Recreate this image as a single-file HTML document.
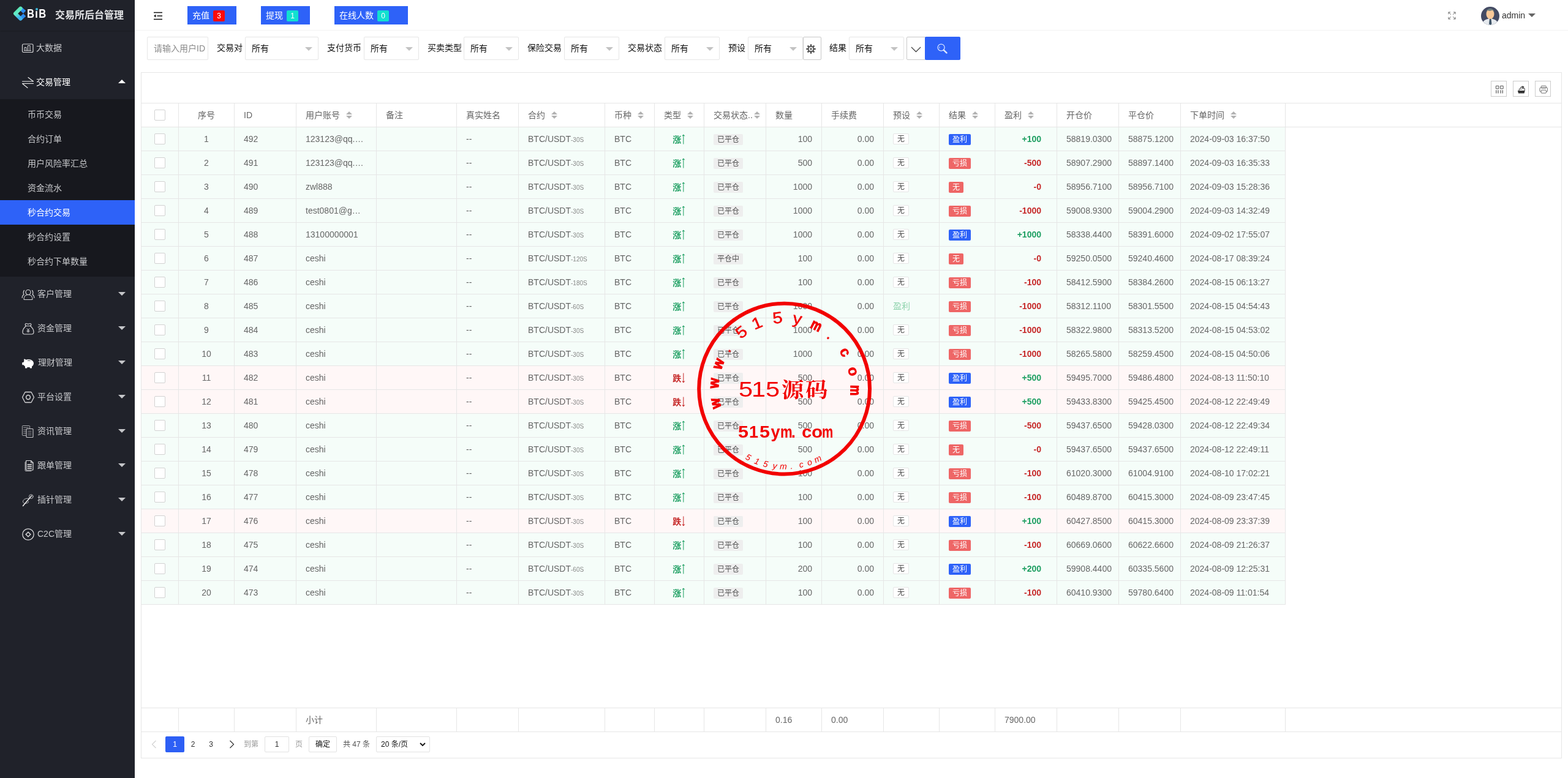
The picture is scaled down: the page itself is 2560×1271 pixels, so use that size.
<!DOCTYPE html>
<html lang="zh-CN">
<head>
<meta charset="utf-8">
<title>交易所后台管理</title>
<style>
*{box-sizing:border-box;margin:0;padding:0}
html,body{width:2560px;height:1271px;overflow:hidden;background:#fff}
body{font-family:"Liberation Sans","Noto Sans CJK SC",sans-serif;font-size:14px;color:#333;position:relative;line-height:24px}
#app{position:absolute;left:0;top:0;width:2560px;height:1271px;overflow:hidden;will-change:transform;background:#fff}
i{font-style:normal}
svg{display:block}
/* sidebar */
.side{position:absolute;left:0;top:0;width:220px;height:1271px;background:#20222a;color:#c2c4c8}
.logo{position:absolute;left:0;top:0;width:220px;height:50px;box-shadow:0 1px 2px rgba(0,0,0,.18)}
.logo svg{position:absolute}
.logo .bib{position:absolute;left:43.700px;top:9.300px;font-size:19.500px;font-weight:700;color:#fff;line-height:26px;letter-spacing:1.500px;transform:scaleX(.85);transform-origin:0 0}
.logo .dot{position:absolute;left:57.700px;top:12.600px;width:4.400px;height:4.400px;border-radius:50%;background:#3fb6d8;box-shadow:0 0 0 0.600px #20222a}
.logo .tt{position:absolute;left:90px;top:12px;font-size:16px;font-weight:700;color:#dfe0e2;line-height:26px;white-space:nowrap}
.mi{position:absolute;left:0;width:220px;height:56px;line-height:56px;font-size:14px;color:#c5c6c9;white-space:nowrap}
.mi .ic{position:absolute;left:35px;top:18px}
.mi .tx{position:absolute;left:61px;top:0}
.mi .ar{position:absolute;left:193px;top:25px;width:0;height:0;border:6px solid transparent;border-top-color:#c5c6c9;border-bottom-width:0}
.mi.open{color:#fff}
.mi.open .ar{top:24px;border:6px solid transparent;border-bottom-color:#fff;border-top-width:0}
.sub{position:absolute;left:0;top:162px;width:220px;height:290px;background:#17181e;padding-top:5px}
.sub div{height:40px;line-height:40px;padding-left:45px;font-size:14px;color:#c5c6c9;white-space:nowrap}
.sub div.on{background:#2e62f8;color:#fff}
/* header */
.top{position:absolute;left:220px;top:0;width:2340px;height:50px;border-bottom:1px solid #f3f3f3;background:#fff}
.top .ham{position:absolute;left:30px;top:19px}
.hb{position:absolute;top:10px;height:30px;line-height:30px;background:#2e62f8;color:#fff;font-size:14px;padding-left:8px;white-space:nowrap}
.hb .bd{position:absolute;top:6.500px;height:18px;min-width:19px;line-height:18px;border-radius:2px;font-size:12px;text-align:center;color:#fff}
.top .fs{position:absolute;left:2143.500px;top:19.300px}
.top .av{position:absolute;left:2198px;top:11px;width:30px;height:30px}
.top .ad{position:absolute;left:2232px;top:13px;font-size:14px;color:#333;line-height:24px}
.top .ca{position:absolute;left:2275px;top:22px;width:0;height:0;border:6px solid transparent;border-top-color:#666;border-bottom-width:0}
/* filter */
.flt{position:absolute;left:220px;top:50px;width:2340px;height:60px}
.flt .in{position:absolute;top:10px;height:38px;border:1px solid #e6e6e6;border-radius:2px;background:#fff;line-height:37px;padding-left:10px;font-size:14px;color:#111;white-space:nowrap}
.flt .in.ph{color:#8a8a8a}
.flt .in .ed{position:absolute;right:9px;top:15.500px;width:0;height:0;border:6px solid transparent;border-top-color:#c2c2c2;border-bottom-width:0}
.flt .lb{position:absolute;top:10px;height:38px;line-height:36px;font-size:14px;color:#111;white-space:nowrap}
.flt .bt{position:absolute;top:10px;height:38px;border:1px solid #c9c9c9;border-radius:2px;background:#fff}
.flt .bt svg{position:absolute}
.flt .sb{position:absolute;top:10px;height:38px;border-radius:2px;background:#2e62f8}
/* table */
.tv{position:absolute;left:230px;top:118px;width:2320px;height:1121px;border:1px solid #e6e6e6;background:#fff;color:#666}
.tool{position:relative;height:50px;border-bottom:1px solid #e6e6e6}
.tool .tbn{position:absolute;top:13px;width:26px;height:26px;border:1px solid #ccc}
.tool .tbn svg{position:absolute;left:5.500px;top:5.500px}
.tb{border-collapse:separate;border-spacing:0;table-layout:fixed}
.tb th,.tb td{height:39px;border-right:1px solid #e6e6e6;border-bottom:1px solid #e6e6e6;padding:0;font-weight:400;text-align:left;font-size:14px;color:#666;vertical-align:middle;overflow:hidden;white-space:nowrap}
.tb .cell{height:28px;line-height:28px;padding:0 15px;position:relative;overflow:hidden;white-space:nowrap}
.tb .c{text-align:center}
.tb .rt{text-align:right}
.tb tr.up td{background:#f5fdf9}
.tb tr.down td{background:#fff7f7}
.cb{display:block;width:18px;height:18px;border:1px solid #d2d2d2;border-radius:2px;background:#fff;margin:0 auto}
.sort{display:inline-block;position:relative;width:10px;height:20px;margin-left:10px;vertical-align:middle;top:-1px}
.sort i{position:absolute;left:0;width:0;height:0;border:5px solid transparent}
.sort .up{top:4px;border-bottom-color:#b2b2b2;border-top-width:0;border-bottom-width:5px}
.sort .dn{top:11px;border-top-color:#b2b2b2;border-bottom-width:0;border-top-width:5px}
.sort.s2{position:absolute;right:9px;top:4px;margin:0}
small{font-size:10px;color:#888}
.g{color:#1e9f62;font-weight:700;position:relative;top:1px}
.aw{font-family:"NanumGothic",sans-serif;font-size:16px;font-weight:700}
.tb td.pf .cell{padding-right:25px}
.r{color:#c62828;font-weight:700;position:relative;top:1px}
.pg{color:#1e9f62;font-weight:700}
.pr{color:#c62828;font-weight:700}
.tag{display:inline-block;height:18px;line-height:18px;padding:0 6px;font-size:12px;border-radius:2px;background:#eee;color:#555;vertical-align:middle;position:relative;top:0}
.pre{display:inline-block;height:18px;line-height:16px;padding:0 6px;font-size:12px;border-radius:2px;border:1px solid #e6e6e6;background:#fff;color:#555;vertical-align:middle;position:relative;top:-1px}
.preg{color:#8fd3ad;font-size:14px}
.res{display:inline-block;height:18px;line-height:18px;padding:0 6px;font-size:12px;border-radius:2px;color:#fff;vertical-align:middle;position:relative;top:0}
.res.win{background:#2e62f8}
.res.loss,.res.none{background:#ee6666}
.tot{position:absolute;left:0;top:1038px}
.hl{position:absolute;left:0;width:2318px;height:1px;background:#e6e6e6}
.tot td{font-size:14px}
.pgr{position:absolute;left:0;top:1077px;width:2318px;height:42px;font-size:12px;color:#333;line-height:26px}
.pgr>*{position:absolute;top:7px;height:26px;line-height:26px;white-space:nowrap}
/* watermark stamp */
.stamp{position:absolute;width:310px;height:310px;color:#f20000;font-family:"Liberation Sans","Noto Sans CJK SC",sans-serif;white-space:nowrap}
.stamp svg{position:absolute;left:0;top:0}
.stamp .arc{position:absolute;width:0;height:0}
.stamp .arc span{position:absolute;left:-30px;top:0;width:60px;height:0;line-height:0;text-align:center;transform-origin:30px 0;font-size:26px;-webkit-text-stroke:0.500px #f20000}
.stamp .arc span.b{font-size:24px;font-weight:700;-webkit-text-stroke:0.600px #f20000}
.stamp .arc span.h{font-size:24px;font-weight:700;-webkit-text-stroke:1.300px #f20000}
.stamp .arc.lo span{font-size:14px;font-style:italic;-webkit-text-stroke:0}
.stamp .mid{position:absolute;width:310px;height:0}
.stamp .mid span{position:absolute;top:0;height:0;line-height:0;transform-origin:0 0;font-size:27px;font-weight:700}
.stamp .mid span.d{font-size:36px;font-weight:400}
.stamp .mid span.k{font-family:"Noto Serif CJK SC",serif;font-size:34px;font-weight:700;transform:scaleX(1.07)}

</style>
</head>
<body>
<div id="app">
<div class="side">
<div class="logo">
<svg width="26" height="28" viewBox="0 0 26 28" style="left:20px;top:8px"><defs><linearGradient id="lg1" x1="0" y1="0" x2="0.300" y2="1"><stop offset="0" stop-color="#58e6ae"/><stop offset="0.550" stop-color="#63ebc8"/><stop offset="1" stop-color="#3fb4ee"/></linearGradient></defs><path d="M13.500 5.600l6.600 6.200M13.500 22.600l6.600-6.200" stroke="#2b8cef" stroke-width="6" fill="none"/><path d="M13.500 5.600L5 14.100l8.500 8.500" stroke="url(#lg1)" stroke-width="6" stroke-linejoin="round" stroke-linecap="round" fill="none"/></svg>
<span class="bib">BiB</span><i class="dot"></i><span class="tt">交易所后台管理</span>
</div>
<div class="mi" style="top:50px"><svg class="ic" width="22" height="22" viewBox="0 0 22 22" fill="none" stroke="#d6d6d8" stroke-width="1.200" stroke-linecap="round" stroke-linejoin="round"><rect x="1.500" y="4" width="17.500" height="13.500" rx="2"/><path d="M5 14.500V9.500h3v5M10.500 14.500V6.500h3.500v8M4.500 14.800h11" stroke-width="1"/></svg><span class="tx" style="left:59px">大数据</span></div>
<div class="mi open" style="top:106px"><svg class="ic" width="22" height="22" viewBox="0 0 22 22" fill="none" stroke="#d6d6d8" stroke-width="1.200" stroke-linecap="round" stroke-linejoin="round"><path d="M1.500 9h18L11 2.500M19.500 12.500h-18L10 19.500" stroke="#f2f2f2" stroke-width="1.100"/></svg><span class="tx" style="left:59px">交易管理</span><i class="ar"></i></div>
<div class="sub">
<div>币币交易</div>
<div>合约订单</div>
<div>用户风险率汇总</div>
<div>资金流水</div>
<div class="on">秒合约交易</div>
<div>秒合约设置</div>
<div>秒合约下单数量</div>
</div>
<div class="mi" style="top:452px"><svg class="ic" width="22" height="22" viewBox="0 0 22 22" fill="none" stroke="#d6d6d8" stroke-width="1.200" stroke-linecap="round" stroke-linejoin="round"><circle cx="11" cy="7.500" r="4"/><path d="M4 18.500c0-4.500 3-7 7-7s7 2.500 7 7c0 0.800-0.500 1-1 1H5c-0.500 0-1-0.200-1-1z"/><path d="M4.500 4.500C2.800 6 2.800 9.500 4 11c-1.500 1-2.800 3-2.800 5.500M17.500 4.500c1.700 1.500 1.700 5 0.500 6.500 1.500 1 2.800 3 2.800 5.500"/></svg><span class="tx">客户管理</span><i class="ar"></i></div>
<div class="mi" style="top:508px"><svg class="ic" width="22" height="22" viewBox="0 0 22 22" fill="none" stroke="#d6d6d8" stroke-width="1.200" stroke-linecap="round" stroke-linejoin="round"><path d="M7.500 6.500C5.500 5 6 2.500 7.500 2.500c1.500 0 2 1 3.500 1s2-1 3.500-1c1.500 0 2 2.500 0 4"/><path d="M7.500 6.500h7c3 2.500 5.500 6.500 5.500 10 0 2.500-1.500 3.500-3.500 3.500h-11C3.500 20 2 19 2 16.500c0-3.500 2.500-7.500 5.500-10z"/><path d="M9 10.500l2 2.500 2-2.500M11 13v4M9 14h4M9 15.800h4" stroke-width="0.900"/></svg><span class="tx">资金管理</span><i class="ar"></i></div>
<div class="mi" style="top:564px"><svg class="ic" width="22" height="22" viewBox="0 0 22 22"><path d="M4.500 7.500C4 6 4 5 4.600 4.500c1 0 2 0.600 2.800 1.300C8.500 5.300 10 5 11.500 5c5 0 8.500 3 8.500 6.500 0 2.200-1.200 4-3 5.200V19.500h-3.200v-1.600c-0.800 0.100-1.600 0.200-2.300 0.200-0.800 0-1.500-0.100-2.200-0.200V19.500H6v-2.700c-1-0.700-1.800-1.500-2.300-2.500H1.800c-0.400 0-0.600-0.300-0.600-0.600v-3c0-0.400 0.300-0.600 0.600-0.600h1.600c0.200-0.900 0.600-1.800 1.100-2.600z" fill="#fff"/><path d="M10 7.200c1.500-0.400 3-0.300 4.500 0.300" stroke="#20222a" stroke-width="0.900" fill="none"/></svg><span class="tx" style="left:62px">理财管理</span><i class="ar"></i></div>
<div class="mi" style="top:620px"><svg class="ic" width="22" height="22" viewBox="0 0 22 22" fill="none" stroke="#d6d6d8" stroke-width="1.200" stroke-linecap="round" stroke-linejoin="round"><path d="M6.800 2.500h8.400c0.500 0 0.900 0.300 1.200 0.700l3.700 7c0.300 0.500 0.300 1.100 0 1.600l-3.700 7c-0.300 0.400-0.700 0.700-1.200 0.700H6.800c-0.500 0-0.900-0.300-1.200-0.700l-3.700-7c-0.300-0.500-0.300-1.100 0-1.600l3.700-7c0.300-0.400 0.700-0.700 1.200-0.700z" stroke-width="1.300"/><circle cx="11" cy="11" r="3.400" stroke-width="1.500"/></svg><span class="tx">平台设置</span><i class="ar"></i></div>
<div class="mi" style="top:676px"><svg class="ic" width="22" height="22" viewBox="0 0 22 22" fill="none" stroke="#d6d6d8" stroke-width="1.200" stroke-linecap="round" stroke-linejoin="round"><path d="M7.500 17.500H2.200c-0.500 0-0.800-0.300-0.800-0.800V2.300c0-0.500 0.300-0.800 0.800-0.800h10.600c0.500 0 0.800 0.300 0.800 0.800V6" stroke="#a9aaad" stroke-width="1"/><path d="M3.500 4.500h8M3.500 8h4M3.500 11h4M3.500 14h4" stroke="#8e8f93" stroke-width="1.200"/><rect x="8" y="6.500" width="11" height="14" rx="1" stroke="#c9c9cc" stroke-width="1.100"/><path d="M11 10.500h5M11 13.500h5M11 16.500h5" stroke="#8e8f93" stroke-width="1"/></svg><span class="tx">资讯管理</span><i class="ar"></i></div>
<div class="mi" style="top:732px"><svg class="ic" width="22" height="22" viewBox="0 0 22 22" fill="none" stroke="#d6d6d8" stroke-width="1.200" stroke-linecap="round" stroke-linejoin="round"><path d="M6 5v13.500c0 0.500 0.400 1 1 1h9" stroke="#b9babd" stroke-width="1"/><path d="M4 6.500v13c0 0.500 0.400 1 1 1h9" stroke="#8e8f93" stroke-width="1" opacity="0"/><path d="M8.500 2.500h7l3.500 3.500v11c0 0.600-0.400 1-1 1h-9.500c-0.600 0-1-0.400-1-1V3.500c0-0.600 0.400-1 1-1z" stroke="#dcdcde" stroke-width="1.200"/><path d="M15.500 2.500V6h3.500" stroke="#dcdcde" stroke-width="1"/><path d="M10 9h6.500M10 12h6.500M10 15h6.500" stroke="#e8e8e8" stroke-width="1.300"/></svg><span class="tx">跟单管理</span><i class="ar"></i></div>
<div class="mi" style="top:788px"><svg class="ic" width="22" height="22" viewBox="0 0 22 22" fill="none" stroke="#d6d6d8" stroke-width="1.200" stroke-linecap="round" stroke-linejoin="round"><circle cx="15.800" cy="5.200" r="3.300" stroke="#bdbec1" stroke-width="1"/><path d="M12.500 8.500C8 7.500 3 9.500 2.500 13c-0.400 3 3 4 6 3.200 2-0.500 3.500-1.500 3-3" stroke="#b0b1b4" stroke-width="1"/><path d="M16.500 4L2.500 20.500" stroke="#f0f0f0" stroke-width="1.500"/></svg><span class="tx">插针管理</span><i class="ar"></i></div>
<div class="mi" style="top:844px"><svg class="ic" width="22" height="22" viewBox="0 0 22 22" fill="none" stroke="#d6d6d8" stroke-width="1.200" stroke-linecap="round" stroke-linejoin="round"><circle cx="11" cy="11" r="9.200" stroke-width="1.300"/><path d="M11 7.200l3.800 3.800-3.800 3.800-3.800-3.800z" stroke-width="1.500" stroke-linejoin="miter"/></svg><span class="tx">C2C管理</span><i class="ar"></i></div>
</div>

<div class="top">
<svg class="ham" width="16" height="14" viewBox="0 0 16 14"><path d="M1 1.5h14M6.5 7h8.5M1 12.5h14" stroke="#111" stroke-width="1.6" fill="none"/><path d="M4.5 4.5v5L1 7z" fill="#111"/></svg>
<div class="hb" style="left:86px;width:80px">充值<span class="bd" style="left:42px;background:#ff0a0a">3</span></div>
<div class="hb" style="left:206px;width:80px">提现<span class="bd" style="left:42px;background:#12e0d0">1</span></div>
<div class="hb" style="left:326px;width:120px">在线人数<span class="bd" style="left:70px;background:#12e0d0">0</span></div>
<svg class="fs" width="13" height="13" viewBox="0 0 14 14"><path d="M1 4.500V1h3.500M1 1l4.200 4.200M9.500 1H13v3.500M13 1L8.800 5.200M1 9.500V13h3.500M1 13l4.200-4.200M13 9.500V13H9.500M13 13L8.800 8.800" stroke="#666" stroke-width="1" fill="none"/></svg>
<svg class="av" viewBox="0 0 30 30"><defs><clipPath id="avc"><circle cx="15" cy="15" r="15"/></clipPath></defs><g clip-path="url(#avc)"><rect width="30" height="30" fill="#434a63"/><path d="M2 30c0-6 4-9 9-10l4-2 4 2c5 1 9 4 9 10z" fill="#e6eaee"/><path d="M14 19h2.4l1 9-2.2 2-2.2-2z" fill="#3d5266"/><ellipse cx="15" cy="12" rx="6.5" ry="8" fill="#f8c898"/><path d="M8.5 10c0-5 3-7 6.5-7s6.500 2 6.500 7c-1-3-2-4.500-3.500-4.500-1.500 1.500-5.500 1.500-7 0.500-1.500 0.500-2 2-2.500 4z" fill="#6e7f80"/></g></svg>
<span class="ad">admin</span><i class="ca"></i>
</div>
<div class="flt">
<div class="in ph" style="left:20px;width:100px">请输入用户ID</div>
<div class="lb" style="left:134px">交易对</div><div class="in" style="left:180px;width:120px">所有<i class="ed"></i></div>
<div class="lb" style="left:314px">支付货币</div><div class="in" style="left:374px;width:90px">所有<i class="ed"></i></div>
<div class="lb" style="left:478px">买卖类型</div><div class="in" style="left:537px;width:90px">所有<i class="ed"></i></div>
<div class="lb" style="left:641px">保险交易</div><div class="in" style="left:701px;width:90px">所有<i class="ed"></i></div>
<div class="lb" style="left:805px">交易状态</div><div class="in" style="left:865px;width:90px">所有<i class="ed"></i></div>
<div class="lb" style="left:969px">预设</div><div class="in" style="left:1001px;width:90px">所有<i class="ed"></i></div>
<div class="bt" style="left:1091px;width:30px"><svg width="16" height="16" viewBox="0 0 16 16" style="left:4px;top:10.500px"><g fill="#555"><circle cx="8" cy="8" r="5.200"/><rect x="6.700" y="0.300" width="2.600" height="15.400"/><rect x="6.700" y="0.300" width="2.600" height="15.400" transform="rotate(45 8 8)"/><rect x="6.700" y="0.300" width="2.600" height="15.400" transform="rotate(90 8 8)"/><rect x="6.700" y="0.300" width="2.600" height="15.400" transform="rotate(135 8 8)"/></g><circle cx="8" cy="8" r="3.300" fill="#fff"/><circle cx="8" cy="8" r="1.700" fill="#555"/></svg></div>
<div class="lb" style="left:1134px">结果</div><div class="in" style="left:1166px;width:90px">所有<i class="ed"></i></div>
<div class="bt" style="left:1260px;width:31px;border-radius:2px 0 0 2px"><svg width="17" height="9.500" viewBox="0 0 18 10" style="left:5.500px;top:15px"><path d="M1 1l8 8 8-8" stroke="#444" stroke-width="1.300" fill="none"/></svg></div>
<div class="sb" style="left:1290px;width:58px"><svg width="18.500" height="18.500" viewBox="0 0 20 20" style="position:absolute;left:18.500px;top:10px"><circle cx="8.200" cy="8.200" r="6" stroke="#d9e6ff" stroke-width="1.400" fill="none"/><path d="M12.800 12.800l5 5" stroke="#d9e6ff" stroke-width="2.600" stroke-linecap="round"/><path d="M5.500 6.500a3.500 3.500 0 0 0 0 3.500" stroke="#d9e6ff" stroke-width="1" fill="none"/></svg></div>
</div>

<div class="tv">
<div class="tool">
<div class="tbn" style="left:2203px"><svg width="14.500" height="14.500" viewBox="0 0 16 16"><path d="M1.500 1.500h5v5h-5zM9.500 1.500h5v5h-5z" stroke="#444" stroke-width="1" fill="none"/><path d="M2 9v6M5.500 9v6M10 9v6M13.500 9v6" stroke="#444" stroke-width="1.200" fill="none"/></svg></div>
<div class="tbn" style="left:2239px"><svg width="14.500" height="14.500" viewBox="0 0 16 16"><path d="M1 10h13l-1.200 5H2.200z" fill="#333"/><path d="M3.500 10V7h5M9 6h4.500v4" stroke="#333" stroke-width="1" fill="none"/><path d="M5 6.500C5 4 7 2.500 9.500 2.500V1L13 3.500 9.500 6V4.200C7.500 4.200 6 5 5 6.500z" fill="#333"/></svg></div>
<div class="tbn" style="left:2275px"><svg width="14.500" height="14.500" viewBox="0 0 16 16"><rect x="3.500" y="1.500" width="9" height="4" rx="1" stroke="#666" stroke-width="1" fill="none"/><rect x="1" y="4.500" width="14" height="7.500" rx="2" stroke="#666" stroke-width="1" fill="none"/><rect x="3.500" y="9" width="9" height="5.500" rx="1" stroke="#666" stroke-width="1" fill="#fff"/></svg></div>
</div>

<table class="tb hd" style="width:1868px"><colgroup><col style="width:61px"><col style="width:91px"><col style="width:101px"><col style="width:131px"><col style="width:131px"><col style="width:101px"><col style="width:141px"><col style="width:81px"><col style="width:81px"><col style="width:101px"><col style="width:91px"><col style="width:101px"><col style="width:91px"><col style="width:91px"><col style="width:101px"><col style="width:101px"><col style="width:101px"><col style="width:171px"></colgroup>
<thead><tr>
<th class="c"><i class="cb"></i></th>
<th class="c"><div class="cell">序号</div></th>
<th><div class="cell"><span>ID</span></div></th>
<th><div class="cell"><span>用户账号</span><span class="sort"><i class="up"></i><i class="dn"></i></span></div></th>
<th><div class="cell"><span>备注</span></div></th>
<th><div class="cell"><span>真实姓名</span></div></th>
<th><div class="cell"><span>合约</span><span class="sort"><i class="up"></i><i class="dn"></i></span></div></th>
<th><div class="cell"><span>币种</span><span class="sort"><i class="up"></i><i class="dn"></i></span></div></th>
<th><div class="cell"><span>类型</span><span class="sort"><i class="up"></i><i class="dn"></i></span></div></th>
<th><div class="cell"><span class="el">交易状态..</span><span class="sort s2"><i class="up"></i><i class="dn"></i></span></div></th>
<th><div class="cell"><span>数量</span></div></th>
<th><div class="cell"><span>手续费</span></div></th>
<th><div class="cell"><span>预设</span><span class="sort"><i class="up"></i><i class="dn"></i></span></div></th>
<th><div class="cell"><span>结果</span><span class="sort"><i class="up"></i><i class="dn"></i></span></div></th>
<th><div class="cell"><span>盈利</span><span class="sort"><i class="up"></i><i class="dn"></i></span></div></th>
<th><div class="cell"><span>开仓价</span></div></th>
<th><div class="cell"><span>平仓价</span></div></th>
<th><div class="cell"><span>下单时间</span><span class="sort"><i class="up"></i><i class="dn"></i></span></div></th>
</tr></thead><tbody>
<tr class="up">
<td class="c"><i class="cb"></i></td>
<td class="c"><div class="cell">1</div></td>
<td><div class="cell">492</div></td>
<td><div class="cell">123123@qq.…</div></td>
<td><div class="cell"></div></td>
<td><div class="cell">--</div></td>
<td><div class="cell">BTC/USDT<small>-30S</small></div></td>
<td><div class="cell">BTC</div></td>
<td class="c"><div class="cell"><b class="g">涨<span class="aw">↑</span></b></div></td>
<td><div class="cell"><span class="tag">已平仓</span></div></td>
<td class="rt"><div class="cell">100</div></td>
<td class="rt"><div class="cell">0.00</div></td>
<td><div class="cell"><span class="pre">无</span></div></td>
<td><div class="cell"><span class="res win">盈利</span></div></td>
<td class="rt pf"><div class="cell"><b class="pg">+100</b></div></td>
<td><div class="cell">58819.0300</div></td>
<td><div class="cell">58875.1200</div></td>
<td><div class="cell">2024-09-03 16:37:50</div></td>
</tr>
<tr class="up">
<td class="c"><i class="cb"></i></td>
<td class="c"><div class="cell">2</div></td>
<td><div class="cell">491</div></td>
<td><div class="cell">123123@qq.…</div></td>
<td><div class="cell"></div></td>
<td><div class="cell">--</div></td>
<td><div class="cell">BTC/USDT<small>-30S</small></div></td>
<td><div class="cell">BTC</div></td>
<td class="c"><div class="cell"><b class="g">涨<span class="aw">↑</span></b></div></td>
<td><div class="cell"><span class="tag">已平仓</span></div></td>
<td class="rt"><div class="cell">500</div></td>
<td class="rt"><div class="cell">0.00</div></td>
<td><div class="cell"><span class="pre">无</span></div></td>
<td><div class="cell"><span class="res loss">亏损</span></div></td>
<td class="rt pf"><div class="cell"><b class="pr">-500</b></div></td>
<td><div class="cell">58907.2900</div></td>
<td><div class="cell">58897.1400</div></td>
<td><div class="cell">2024-09-03 16:35:33</div></td>
</tr>
<tr class="up">
<td class="c"><i class="cb"></i></td>
<td class="c"><div class="cell">3</div></td>
<td><div class="cell">490</div></td>
<td><div class="cell">zwl888</div></td>
<td><div class="cell"></div></td>
<td><div class="cell">--</div></td>
<td><div class="cell">BTC/USDT<small>-30S</small></div></td>
<td><div class="cell">BTC</div></td>
<td class="c"><div class="cell"><b class="g">涨<span class="aw">↑</span></b></div></td>
<td><div class="cell"><span class="tag">已平仓</span></div></td>
<td class="rt"><div class="cell">1000</div></td>
<td class="rt"><div class="cell">0.00</div></td>
<td><div class="cell"><span class="pre">无</span></div></td>
<td><div class="cell"><span class="res none">无</span></div></td>
<td class="rt pf"><div class="cell"><b class="pr">-0</b></div></td>
<td><div class="cell">58956.7100</div></td>
<td><div class="cell">58956.7100</div></td>
<td><div class="cell">2024-09-03 15:28:36</div></td>
</tr>
<tr class="up">
<td class="c"><i class="cb"></i></td>
<td class="c"><div class="cell">4</div></td>
<td><div class="cell">489</div></td>
<td><div class="cell">test0801@g…</div></td>
<td><div class="cell"></div></td>
<td><div class="cell">--</div></td>
<td><div class="cell">BTC/USDT<small>-30S</small></div></td>
<td><div class="cell">BTC</div></td>
<td class="c"><div class="cell"><b class="g">涨<span class="aw">↑</span></b></div></td>
<td><div class="cell"><span class="tag">已平仓</span></div></td>
<td class="rt"><div class="cell">1000</div></td>
<td class="rt"><div class="cell">0.00</div></td>
<td><div class="cell"><span class="pre">无</span></div></td>
<td><div class="cell"><span class="res loss">亏损</span></div></td>
<td class="rt pf"><div class="cell"><b class="pr">-1000</b></div></td>
<td><div class="cell">59008.9300</div></td>
<td><div class="cell">59004.2900</div></td>
<td><div class="cell">2024-09-03 14:32:49</div></td>
</tr>
<tr class="up">
<td class="c"><i class="cb"></i></td>
<td class="c"><div class="cell">5</div></td>
<td><div class="cell">488</div></td>
<td><div class="cell">13100000001</div></td>
<td><div class="cell"></div></td>
<td><div class="cell">--</div></td>
<td><div class="cell">BTC/USDT<small>-30S</small></div></td>
<td><div class="cell">BTC</div></td>
<td class="c"><div class="cell"><b class="g">涨<span class="aw">↑</span></b></div></td>
<td><div class="cell"><span class="tag">已平仓</span></div></td>
<td class="rt"><div class="cell">1000</div></td>
<td class="rt"><div class="cell">0.00</div></td>
<td><div class="cell"><span class="pre">无</span></div></td>
<td><div class="cell"><span class="res win">盈利</span></div></td>
<td class="rt pf"><div class="cell"><b class="pg">+1000</b></div></td>
<td><div class="cell">58338.4400</div></td>
<td><div class="cell">58391.6000</div></td>
<td><div class="cell">2024-09-02 17:55:07</div></td>
</tr>
<tr class="up">
<td class="c"><i class="cb"></i></td>
<td class="c"><div class="cell">6</div></td>
<td><div class="cell">487</div></td>
<td><div class="cell">ceshi</div></td>
<td><div class="cell"></div></td>
<td><div class="cell">--</div></td>
<td><div class="cell">BTC/USDT<small>-120S</small></div></td>
<td><div class="cell">BTC</div></td>
<td class="c"><div class="cell"><b class="g">涨<span class="aw">↑</span></b></div></td>
<td><div class="cell"><span class="tag">平仓中</span></div></td>
<td class="rt"><div class="cell">100</div></td>
<td class="rt"><div class="cell">0.00</div></td>
<td><div class="cell"><span class="pre">无</span></div></td>
<td><div class="cell"><span class="res none">无</span></div></td>
<td class="rt pf"><div class="cell"><b class="pr">-0</b></div></td>
<td><div class="cell">59250.0500</div></td>
<td><div class="cell">59240.4600</div></td>
<td><div class="cell">2024-08-17 08:39:24</div></td>
</tr>
<tr class="up">
<td class="c"><i class="cb"></i></td>
<td class="c"><div class="cell">7</div></td>
<td><div class="cell">486</div></td>
<td><div class="cell">ceshi</div></td>
<td><div class="cell"></div></td>
<td><div class="cell">--</div></td>
<td><div class="cell">BTC/USDT<small>-180S</small></div></td>
<td><div class="cell">BTC</div></td>
<td class="c"><div class="cell"><b class="g">涨<span class="aw">↑</span></b></div></td>
<td><div class="cell"><span class="tag">已平仓</span></div></td>
<td class="rt"><div class="cell">100</div></td>
<td class="rt"><div class="cell">0.00</div></td>
<td><div class="cell"><span class="pre">无</span></div></td>
<td><div class="cell"><span class="res loss">亏损</span></div></td>
<td class="rt pf"><div class="cell"><b class="pr">-100</b></div></td>
<td><div class="cell">58412.5900</div></td>
<td><div class="cell">58384.2600</div></td>
<td><div class="cell">2024-08-15 06:13:27</div></td>
</tr>
<tr class="up">
<td class="c"><i class="cb"></i></td>
<td class="c"><div class="cell">8</div></td>
<td><div class="cell">485</div></td>
<td><div class="cell">ceshi</div></td>
<td><div class="cell"></div></td>
<td><div class="cell">--</div></td>
<td><div class="cell">BTC/USDT<small>-60S</small></div></td>
<td><div class="cell">BTC</div></td>
<td class="c"><div class="cell"><b class="g">涨<span class="aw">↑</span></b></div></td>
<td><div class="cell"><span class="tag">已平仓</span></div></td>
<td class="rt"><div class="cell">1000</div></td>
<td class="rt"><div class="cell">0.00</div></td>
<td><div class="cell"><span class="preg">盈利</span></div></td>
<td><div class="cell"><span class="res loss">亏损</span></div></td>
<td class="rt pf"><div class="cell"><b class="pr">-1000</b></div></td>
<td><div class="cell">58312.1100</div></td>
<td><div class="cell">58301.5500</div></td>
<td><div class="cell">2024-08-15 04:54:43</div></td>
</tr>
<tr class="up">
<td class="c"><i class="cb"></i></td>
<td class="c"><div class="cell">9</div></td>
<td><div class="cell">484</div></td>
<td><div class="cell">ceshi</div></td>
<td><div class="cell"></div></td>
<td><div class="cell">--</div></td>
<td><div class="cell">BTC/USDT<small>-30S</small></div></td>
<td><div class="cell">BTC</div></td>
<td class="c"><div class="cell"><b class="g">涨<span class="aw">↑</span></b></div></td>
<td><div class="cell"><span class="tag">已平仓</span></div></td>
<td class="rt"><div class="cell">1000</div></td>
<td class="rt"><div class="cell">0.00</div></td>
<td><div class="cell"><span class="pre">无</span></div></td>
<td><div class="cell"><span class="res loss">亏损</span></div></td>
<td class="rt pf"><div class="cell"><b class="pr">-1000</b></div></td>
<td><div class="cell">58322.9800</div></td>
<td><div class="cell">58313.5200</div></td>
<td><div class="cell">2024-08-15 04:53:02</div></td>
</tr>
<tr class="up">
<td class="c"><i class="cb"></i></td>
<td class="c"><div class="cell">10</div></td>
<td><div class="cell">483</div></td>
<td><div class="cell">ceshi</div></td>
<td><div class="cell"></div></td>
<td><div class="cell">--</div></td>
<td><div class="cell">BTC/USDT<small>-30S</small></div></td>
<td><div class="cell">BTC</div></td>
<td class="c"><div class="cell"><b class="g">涨<span class="aw">↑</span></b></div></td>
<td><div class="cell"><span class="tag">已平仓</span></div></td>
<td class="rt"><div class="cell">1000</div></td>
<td class="rt"><div class="cell">0.00</div></td>
<td><div class="cell"><span class="pre">无</span></div></td>
<td><div class="cell"><span class="res loss">亏损</span></div></td>
<td class="rt pf"><div class="cell"><b class="pr">-1000</b></div></td>
<td><div class="cell">58265.5800</div></td>
<td><div class="cell">58259.4500</div></td>
<td><div class="cell">2024-08-15 04:50:06</div></td>
</tr>
<tr class="down">
<td class="c"><i class="cb"></i></td>
<td class="c"><div class="cell">11</div></td>
<td><div class="cell">482</div></td>
<td><div class="cell">ceshi</div></td>
<td><div class="cell"></div></td>
<td><div class="cell">--</div></td>
<td><div class="cell">BTC/USDT<small>-30S</small></div></td>
<td><div class="cell">BTC</div></td>
<td class="c"><div class="cell"><b class="r">跌<span class="aw">↓</span></b></div></td>
<td><div class="cell"><span class="tag">已平仓</span></div></td>
<td class="rt"><div class="cell">500</div></td>
<td class="rt"><div class="cell">0.00</div></td>
<td><div class="cell"><span class="pre">无</span></div></td>
<td><div class="cell"><span class="res win">盈利</span></div></td>
<td class="rt pf"><div class="cell"><b class="pg">+500</b></div></td>
<td><div class="cell">59495.7000</div></td>
<td><div class="cell">59486.4800</div></td>
<td><div class="cell">2024-08-13 11:50:10</div></td>
</tr>
<tr class="down">
<td class="c"><i class="cb"></i></td>
<td class="c"><div class="cell">12</div></td>
<td><div class="cell">481</div></td>
<td><div class="cell">ceshi</div></td>
<td><div class="cell"></div></td>
<td><div class="cell">--</div></td>
<td><div class="cell">BTC/USDT<small>-30S</small></div></td>
<td><div class="cell">BTC</div></td>
<td class="c"><div class="cell"><b class="r">跌<span class="aw">↓</span></b></div></td>
<td><div class="cell"><span class="tag">已平仓</span></div></td>
<td class="rt"><div class="cell">500</div></td>
<td class="rt"><div class="cell">0.00</div></td>
<td><div class="cell"><span class="pre">无</span></div></td>
<td><div class="cell"><span class="res win">盈利</span></div></td>
<td class="rt pf"><div class="cell"><b class="pg">+500</b></div></td>
<td><div class="cell">59433.8300</div></td>
<td><div class="cell">59425.4500</div></td>
<td><div class="cell">2024-08-12 22:49:49</div></td>
</tr>
<tr class="up">
<td class="c"><i class="cb"></i></td>
<td class="c"><div class="cell">13</div></td>
<td><div class="cell">480</div></td>
<td><div class="cell">ceshi</div></td>
<td><div class="cell"></div></td>
<td><div class="cell">--</div></td>
<td><div class="cell">BTC/USDT<small>-30S</small></div></td>
<td><div class="cell">BTC</div></td>
<td class="c"><div class="cell"><b class="g">涨<span class="aw">↑</span></b></div></td>
<td><div class="cell"><span class="tag">已平仓</span></div></td>
<td class="rt"><div class="cell">500</div></td>
<td class="rt"><div class="cell">0.00</div></td>
<td><div class="cell"><span class="pre">无</span></div></td>
<td><div class="cell"><span class="res loss">亏损</span></div></td>
<td class="rt pf"><div class="cell"><b class="pr">-500</b></div></td>
<td><div class="cell">59437.6500</div></td>
<td><div class="cell">59428.0300</div></td>
<td><div class="cell">2024-08-12 22:49:34</div></td>
</tr>
<tr class="up">
<td class="c"><i class="cb"></i></td>
<td class="c"><div class="cell">14</div></td>
<td><div class="cell">479</div></td>
<td><div class="cell">ceshi</div></td>
<td><div class="cell"></div></td>
<td><div class="cell">--</div></td>
<td><div class="cell">BTC/USDT<small>-30S</small></div></td>
<td><div class="cell">BTC</div></td>
<td class="c"><div class="cell"><b class="g">涨<span class="aw">↑</span></b></div></td>
<td><div class="cell"><span class="tag">已平仓</span></div></td>
<td class="rt"><div class="cell">500</div></td>
<td class="rt"><div class="cell">0.00</div></td>
<td><div class="cell"><span class="pre">无</span></div></td>
<td><div class="cell"><span class="res none">无</span></div></td>
<td class="rt pf"><div class="cell"><b class="pr">-0</b></div></td>
<td><div class="cell">59437.6500</div></td>
<td><div class="cell">59437.6500</div></td>
<td><div class="cell">2024-08-12 22:49:11</div></td>
</tr>
<tr class="up">
<td class="c"><i class="cb"></i></td>
<td class="c"><div class="cell">15</div></td>
<td><div class="cell">478</div></td>
<td><div class="cell">ceshi</div></td>
<td><div class="cell"></div></td>
<td><div class="cell">--</div></td>
<td><div class="cell">BTC/USDT<small>-30S</small></div></td>
<td><div class="cell">BTC</div></td>
<td class="c"><div class="cell"><b class="g">涨<span class="aw">↑</span></b></div></td>
<td><div class="cell"><span class="tag">已平仓</span></div></td>
<td class="rt"><div class="cell">100</div></td>
<td class="rt"><div class="cell">0.00</div></td>
<td><div class="cell"><span class="pre">无</span></div></td>
<td><div class="cell"><span class="res loss">亏损</span></div></td>
<td class="rt pf"><div class="cell"><b class="pr">-100</b></div></td>
<td><div class="cell">61020.3000</div></td>
<td><div class="cell">61004.9100</div></td>
<td><div class="cell">2024-08-10 17:02:21</div></td>
</tr>
<tr class="up">
<td class="c"><i class="cb"></i></td>
<td class="c"><div class="cell">16</div></td>
<td><div class="cell">477</div></td>
<td><div class="cell">ceshi</div></td>
<td><div class="cell"></div></td>
<td><div class="cell">--</div></td>
<td><div class="cell">BTC/USDT<small>-30S</small></div></td>
<td><div class="cell">BTC</div></td>
<td class="c"><div class="cell"><b class="g">涨<span class="aw">↑</span></b></div></td>
<td><div class="cell"><span class="tag">已平仓</span></div></td>
<td class="rt"><div class="cell">100</div></td>
<td class="rt"><div class="cell">0.00</div></td>
<td><div class="cell"><span class="pre">无</span></div></td>
<td><div class="cell"><span class="res loss">亏损</span></div></td>
<td class="rt pf"><div class="cell"><b class="pr">-100</b></div></td>
<td><div class="cell">60489.8700</div></td>
<td><div class="cell">60415.3000</div></td>
<td><div class="cell">2024-08-09 23:47:45</div></td>
</tr>
<tr class="down">
<td class="c"><i class="cb"></i></td>
<td class="c"><div class="cell">17</div></td>
<td><div class="cell">476</div></td>
<td><div class="cell">ceshi</div></td>
<td><div class="cell"></div></td>
<td><div class="cell">--</div></td>
<td><div class="cell">BTC/USDT<small>-30S</small></div></td>
<td><div class="cell">BTC</div></td>
<td class="c"><div class="cell"><b class="r">跌<span class="aw">↓</span></b></div></td>
<td><div class="cell"><span class="tag">已平仓</span></div></td>
<td class="rt"><div class="cell">100</div></td>
<td class="rt"><div class="cell">0.00</div></td>
<td><div class="cell"><span class="pre">无</span></div></td>
<td><div class="cell"><span class="res win">盈利</span></div></td>
<td class="rt pf"><div class="cell"><b class="pg">+100</b></div></td>
<td><div class="cell">60427.8500</div></td>
<td><div class="cell">60415.3000</div></td>
<td><div class="cell">2024-08-09 23:37:39</div></td>
</tr>
<tr class="up">
<td class="c"><i class="cb"></i></td>
<td class="c"><div class="cell">18</div></td>
<td><div class="cell">475</div></td>
<td><div class="cell">ceshi</div></td>
<td><div class="cell"></div></td>
<td><div class="cell">--</div></td>
<td><div class="cell">BTC/USDT<small>-30S</small></div></td>
<td><div class="cell">BTC</div></td>
<td class="c"><div class="cell"><b class="g">涨<span class="aw">↑</span></b></div></td>
<td><div class="cell"><span class="tag">已平仓</span></div></td>
<td class="rt"><div class="cell">100</div></td>
<td class="rt"><div class="cell">0.00</div></td>
<td><div class="cell"><span class="pre">无</span></div></td>
<td><div class="cell"><span class="res loss">亏损</span></div></td>
<td class="rt pf"><div class="cell"><b class="pr">-100</b></div></td>
<td><div class="cell">60669.0600</div></td>
<td><div class="cell">60622.6600</div></td>
<td><div class="cell">2024-08-09 21:26:37</div></td>
</tr>
<tr class="up">
<td class="c"><i class="cb"></i></td>
<td class="c"><div class="cell">19</div></td>
<td><div class="cell">474</div></td>
<td><div class="cell">ceshi</div></td>
<td><div class="cell"></div></td>
<td><div class="cell">--</div></td>
<td><div class="cell">BTC/USDT<small>-60S</small></div></td>
<td><div class="cell">BTC</div></td>
<td class="c"><div class="cell"><b class="g">涨<span class="aw">↑</span></b></div></td>
<td><div class="cell"><span class="tag">已平仓</span></div></td>
<td class="rt"><div class="cell">200</div></td>
<td class="rt"><div class="cell">0.00</div></td>
<td><div class="cell"><span class="pre">无</span></div></td>
<td><div class="cell"><span class="res win">盈利</span></div></td>
<td class="rt pf"><div class="cell"><b class="pg">+200</b></div></td>
<td><div class="cell">59908.4400</div></td>
<td><div class="cell">60335.5600</div></td>
<td><div class="cell">2024-08-09 12:25:31</div></td>
</tr>
<tr class="up">
<td class="c"><i class="cb"></i></td>
<td class="c"><div class="cell">20</div></td>
<td><div class="cell">473</div></td>
<td><div class="cell">ceshi</div></td>
<td><div class="cell"></div></td>
<td><div class="cell">--</div></td>
<td><div class="cell">BTC/USDT<small>-30S</small></div></td>
<td><div class="cell">BTC</div></td>
<td class="c"><div class="cell"><b class="g">涨<span class="aw">↑</span></b></div></td>
<td><div class="cell"><span class="tag">已平仓</span></div></td>
<td class="rt"><div class="cell">100</div></td>
<td class="rt"><div class="cell">0.00</div></td>
<td><div class="cell"><span class="pre">无</span></div></td>
<td><div class="cell"><span class="res loss">亏损</span></div></td>
<td class="rt pf"><div class="cell"><b class="pr">-100</b></div></td>
<td><div class="cell">60410.9300</div></td>
<td><div class="cell">59780.6400</div></td>
<td><div class="cell">2024-08-09 11:01:54</div></td>
</tr>
</tbody></table>
<table class="tb tot" style="width:1868px"><colgroup><col style="width:61px"><col style="width:91px"><col style="width:101px"><col style="width:131px"><col style="width:131px"><col style="width:101px"><col style="width:141px"><col style="width:81px"><col style="width:81px"><col style="width:101px"><col style="width:91px"><col style="width:101px"><col style="width:91px"><col style="width:91px"><col style="width:101px"><col style="width:101px"><col style="width:101px"><col style="width:171px"></colgroup><tbody><tr>
<td><div class="cell"></div></td>
<td><div class="cell"></div></td>
<td><div class="cell"></div></td>
<td><div class="cell">小计</div></td>
<td><div class="cell"></div></td>
<td><div class="cell"></div></td>
<td><div class="cell"></div></td>
<td><div class="cell"></div></td>
<td><div class="cell"></div></td>
<td><div class="cell"></div></td>
<td><div class="cell">0.16</div></td>
<td><div class="cell">0.00</div></td>
<td><div class="cell"></div></td>
<td><div class="cell"></div></td>
<td><div class="cell">7900.00</div></td>
<td><div class="cell"></div></td>
<td><div class="cell"></div></td>
<td><div class="cell"></div></td>
</tr></tbody></table>
<div class="hl" style="top:88px"></div><div class="hl" style="top:1037px"></div><div class="hl" style="top:1076px"></div>
<div class="pgr">
<span style="left:16px;color:#d2d2d2"><svg width="9" height="14" viewBox="0 0 9 14" style="margin-top:6px"><path d="M7.500 1L1.500 7l6 6" stroke="#d2d2d2" stroke-width="1.200" fill="none"/></svg></span>
<span style="left:39px;width:31px;background:#2d5ff5;color:#fff;text-align:center;border-radius:2px">1</span>
<span style="left:70px;width:28px;text-align:center">2</span>
<span style="left:99px;width:29px;text-align:center">3</span>
<span style="left:143px"><svg width="9" height="14" viewBox="0 0 9 14" style="margin-top:6px"><path d="M1.500 1l6 6-6 6" stroke="#333" stroke-width="1.200" fill="none"/></svg></span>
<span style="left:167px;color:#999">到第</span>
<span style="left:201px;width:40px;border:1px solid #e2e2e2;border-radius:2px;text-align:center;line-height:24px;color:#333">1</span>
<span style="left:251px;color:#999">页</span>
<span style="left:273px;width:46px;border:1px solid #e2e2e2;border-radius:2px;text-align:center;line-height:24px;color:#111">确定</span>
<span style="left:329px;color:#555">共 47 条</span>
<span style="left:383px;width:88px;border:1px solid #e2e2e2;border-radius:2px;line-height:24px;padding-left:7px;color:#111">20 条/页<svg width="10" height="7" viewBox="0 0 10 7" style="position:absolute;right:6px;top:9px"><path d="M1 1l4 4 4-4" stroke="#111" stroke-width="1.800" fill="none"/></svg></span>
</div>

</div>
<div class="stamp" style="left:1125px;top:480px">
<svg width="310" height="310" viewBox="0 0 310 310"><circle cx="155.60" cy="155.20" r="139.40" stroke="#f20000" stroke-width="6" fill="none"/></svg>
<div class="arc" style="left:155.60px;top:155.20px"><span class="h" style="transform:rotate(-102.00deg) translateY(-115.82px) scaleX(0.90)">w</span><span class="h" style="transform:rotate(-85.60deg) translateY(-115.82px) scaleX(0.90)">w</span><span class="h" style="transform:rotate(-69.40deg) translateY(-115.82px) scaleX(0.90)">w</span><span class="n" style="transform:rotate(-55.60deg) translateY(-116.51px) scaleX(1.00)">.</span><span class="n" style="transform:rotate(-37.40deg) translateY(-116.51px) scaleX(1.12)">5</span><span class="n" style="transform:rotate(-22.80deg) translateY(-116.51px) scaleX(1.12)">1</span><span class="n" style="transform:rotate(-5.70deg) translateY(-116.51px) scaleX(1.12)">5</span><span class="n" style="transform:rotate(10.40deg) translateY(-116.51px) scaleX(1.12)">y</span><span class="h" style="transform:rotate(26.60deg) translateY(-115.82px) scaleX(0.80)">m</span><span class="n" style="transform:rotate(40.60deg) translateY(-116.51px) scaleX(1.00)">.</span><span class="b" style="transform:rotate(58.80deg) translateY(-115.82px) scaleX(1.00)">c</span><span class="b" style="transform:rotate(75.80deg) translateY(-115.82px) scaleX(1.00)">o</span><span class="h" style="transform:rotate(91.30deg) translateY(-115.82px) scaleX(0.80)">m</span></div>
<div class="arc lo" style="left:155.60px;top:155.20px"><span style="transform:rotate(27.90deg) translateY(126.65px)">5</span><span style="transform:rotate(20.80deg) translateY(126.65px)">1</span><span style="transform:rotate(14.20deg) translateY(126.65px)">5</span><span style="transform:rotate(7.20deg) translateY(126.65px)">y</span><span style="transform:rotate(0.90deg) translateY(126.65px)">m</span><span style="transform:rotate(-5.10deg) translateY(126.65px)">.</span><span style="transform:rotate(-12.40deg) translateY(126.65px)">c</span><span style="transform:rotate(-18.70deg) translateY(126.65px)">o</span><span style="transform:rotate(-25.20deg) translateY(126.65px)">m</span></div>
<div class="mid" style="left:0;top:167.60px"><span class="d" style="left:80.95px;transform:translateY(-12.10px) scale(1.15,0.97)">5</span><span class="d" style="left:102.02px;transform:translateY(-12.10px) scale(1.15,0.97)">1</span><span class="d" style="left:124.65px;transform:translateY(-12.10px) scale(1.15,0.97)">5</span><span class="k" style="left:151.20px;top:-12.800px">源</span><span class="k" style="left:189.60px;top:-12.800px">码</span></div>
<div class="mid m2" style="left:0;top:235.20px"><span style="left:80.23px;transform:translateY(-9.36px) scaleX(1.13)">5</span><span style="left:97.90px;transform:translateY(-9.36px) scaleX(1.00)">1</span><span style="left:115.33px;transform:translateY(-9.36px) scaleX(1.13)">5</span><span style="left:133.50px;transform:translateY(-9.36px) scaleX(1.00)">y</span><span style="left:149.36px;transform:translateY(-9.36px) scaleX(0.82)">m</span><span style="left:167.00px;transform:translateY(-9.36px) scaleX(0.90)">.</span><span style="left:184.00px;transform:translateY(-9.36px) scaleX(1.08)">c</span><span style="left:200.20px;transform:translateY(-9.36px) scaleX(1.10)">o</span><span style="left:216.78px;transform:translateY(-9.36px) scaleX(0.76)">m</span></div>
</div>

</div>
</body>
</html>
